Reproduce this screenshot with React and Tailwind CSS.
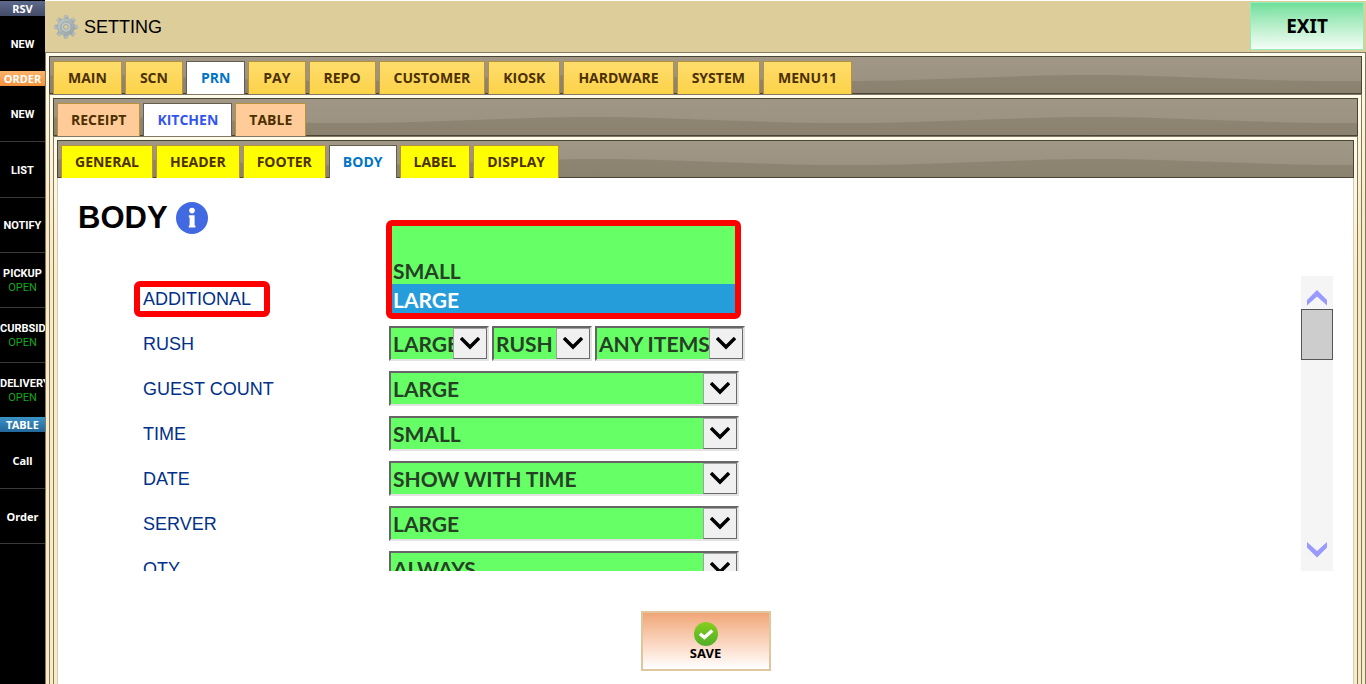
import { useState } from "react";
import clsx from "clsx";

const SIDE_ITEMS = [
  { label: "RSV", heading: "bg-linear-to-b from-[#5d6a8c] to-[#434c68]" },
  { label: "NEW", size: "h-[55px]" },
  { label: "ORDER", heading: "bg-linear-to-b from-[#fbb36a] to-[#f2923c]" },
  { label: "NEW", size: "h-[56px] border-b" },
  { label: "LIST", size: "h-[56px] border-b" },
  { label: "NOTIFY", size: "h-[55px] border-b" },
  { label: "PICKUP", status: "OPEN", size: "h-[55px] border-b" },
  { label: "CURBSIDE", status: "OPEN", size: "h-[55px] border-b" },
  { label: "DELIVERY", status: "OPEN", size: "h-[54px]" },
  { label: "TABLE", heading: "bg-linear-to-b from-[#3b93c6] to-[#22679a]" },
  { label: "Call", size: "h-[57px] border-b", wide: true },
  { label: "Order", size: "h-[55px] border-b", wide: true },
];

const MAIN_TABS = [
  "MAIN",
  "SCN",
  "PRN",
  "PAY",
  "REPO",
  "CUSTOMER",
  "KIOSK",
  "HARDWARE",
  "SYSTEM",
  "MENU11",
];
const PRN_TABS = ["RECEIPT", "KITCHEN", "TABLE"];
const KITCHEN_TABS = ["GENERAL", "HEADER", "FOOTER", "BODY", "LABEL", "DISPLAY"];

const FIELDS = [
  {
    label: "RUSH",
    selects: [
      { value: "LARGE", width: "w-[100px]" },
      { value: "RUSH", width: "w-[100px]" },
      { value: "ANY ITEMS", width: "w-[150px]" },
    ],
  },
  { label: "GUEST COUNT", selects: [{ value: "LARGE", width: "w-[350px]" }] },
  { label: "TIME", selects: [{ value: "SMALL", width: "w-[350px]" }] },
  { label: "DATE", selects: [{ value: "SHOW WITH TIME", width: "w-[350px]" }] },
  { label: "SERVER", selects: [{ value: "LARGE", width: "w-[350px]" }] },
  { label: "QTY", selects: [{ value: "ALWAYS", width: "w-[350px]" }] },
];

const Sidebar = () => (
  <nav className="w-[45px] shrink-0 overflow-hidden bg-black pt-px text-[11px] leading-[14px] font-bold text-white">
    {SIDE_ITEMS.map((item, index) =>
      item.heading ? (
        <h2
          key={index}
          className={clsx(
            "h-[15px] text-center font-['Noto_Sans',sans-serif] leading-4 font-bold",
            item.heading
          )}
        >
          {item.label}
        </h2>
      ) : (
        <button
          key={index}
          className={clsx(
            "flex w-full flex-col justify-center overflow-hidden border-[#3a3a3a] pt-[2px] whitespace-nowrap",
            item.wide
              ? "font-['Noto_Sans',sans-serif]"
              : "font-[Roboto,sans-serif]",
            item.size
          )}
        >
          <span className="block w-full text-center">{item.label}</span>
          {item.status && (
            <span className="block w-full text-center font-normal text-[#0fa81c]">
              {item.status}
            </span>
          )}
        </button>
      )
    )}
  </nav>
);

const GearIcon = () => (
  <svg viewBox="0 0 24 24" className="size-6" aria-hidden="true">
    <defs>
      <linearGradient id="gear" x1="0" y1="0" x2="1" y2="1">
        <stop offset="0" stopColor="#c6cdcd" />
        <stop offset="1" stopColor="#93a0a4" />
      </linearGradient>
    </defs>
    <g fill="url(#gear)" stroke="#98a3a4" strokeWidth="0.4">
      {[0, 45, 90, 135, 180, 225, 270, 315].map((angle) => (
        <path
          key={angle}
          d="M9.6 4.5 L10.2 0.4 H13.8 L14.4 4.5 Z"
          transform={`rotate(${angle} 12 12)`}
        />
      ))}
      <circle cx="12" cy="12" r="8.4" />
    </g>
    <circle cx="12" cy="12" r="5.2" fill="#c0c7c5" stroke="#929ea1" strokeWidth="0.8" />
    <circle cx="12" cy="12" r="2.4" fill="#ddcd9b" stroke="#929ea1" strokeWidth="0.8" />
  </svg>
);

// wood like strip behind the tabs, the wave repeats every 500px
const Wave = ({ id }) => (
  <svg className="absolute inset-0 size-full" aria-hidden="true">
    <defs>
      <linearGradient id={`${id}-shade`} x1="0" y1="0" x2="0" y2="1">
        <stop offset="0" stopColor="#8e8673" />
        <stop offset="1" stopColor="#89816e" />
      </linearGradient>
      <pattern
        id={id}
        x="40"
        width="500"
        height="40"
        patternUnits="userSpaceOnUse"
      >
        <path
          d="M0 18 C90 18 150 24 250 24 S410 18 500 18 V40 H0 Z"
          fill={`url(#${id}-shade)`}
        />
      </pattern>
    </defs>
    <rect width="100%" height="100%" fill={`url(#${id})`} />
  </svg>
);

const TabPanel = ({ id, tabs, active, onChange, tabStyle, tabPadding, activeColor, children }) => (
  <section className="flex grow flex-col border border-b-0 border-[#817865] bg-[#faecc2] bg-[linear-gradient(#fffbea,#faecc2_150px)]">
    <div className="px-[3px] pt-[3px]">
      <div
        role="tablist"
        className="relative flex h-[38px] items-end gap-[3px] border border-[#4a4435] bg-linear-to-b from-[#a19786] to-[#999080] px-[3px]"
      >
        <Wave id={id} />
        {tabs.map((tab) => (
          <button
            key={tab}
            role="tab"
            aria-selected={tab === active}
            onClick={() => onChange(tab)}
            className={clsx(
              "relative -mb-px h-[33px] border border-b-0 font-['Open_Sans',sans-serif] text-[14px] leading-5 font-bold",
              tabPadding,
              tab === active
                ? ["border-[#655e4e] bg-white", activeColor]
                : ["border-[#b8923a] text-[#4c3000]", tabStyle]
            )}
          >
            {tab}
          </button>
        ))}
      </div>
    </div>
    {children}
  </section>
);

const SelectBox = ({ value, width, label, id }) => (
  <div
    className={clsx(
      "relative h-[35px] border-2 border-t-[#666] border-r-[#e3e3e3] border-b-[#e3e3e3] border-l-[#666] bg-[#66ff66]",
      width
    )}
  >
    <select
      id={id}
      aria-label={label}
      defaultValue={value}
      className="block h-full w-full appearance-none overflow-hidden pr-[34px] pl-[2px] font-[Lato,sans-serif] text-[21px] leading-[29px] font-bold text-[#264026] outline-none"
    >
      <option>{value}</option>
    </select>
    <span className="pointer-events-none absolute top-0 right-0 flex h-[31px] w-[34px] items-center justify-center border border-[#696969] border-t-[#a0a0a0] border-l-[#a0a0a0] bg-[#f0f0f0]">
      <svg viewBox="0 0 20 14" className="h-[14px] w-5" aria-hidden="true">
        <path d="M1 1 L10 10 L19 1" fill="none" stroke="#000" strokeWidth="3.4" />
      </svg>
    </span>
  </div>
);

const ScrollBar = () => (
  <div className="flex w-8 flex-col bg-[#f5f5f5]">
    <button aria-label="Scroll up" className="flex h-[33px] justify-center pt-[14px]">
      <svg viewBox="0 0 20 16" className="h-4 w-5">
        <path d="M0 10 L10 0 L20 10 V15.5 L10 6.5 L0 15.5 Z" fill="#9999ff" />
      </svg>
    </button>
    <div className="h-[51px] border border-[#555] bg-[#cdcdcd]" />
    <button aria-label="Scroll down" className="mt-auto flex h-[33px] justify-center pt-1">
      <svg viewBox="0 0 20 16" className="h-4 w-5">
        <path d="M0 0 L10 9 L20 0 V5.5 L10 15.5 L0 5.5 Z" fill="#9999ff" />
      </svg>
    </button>
  </div>
);

const BodyForm = () => (
  <div className="mx-[3px] grow border-x border-[#d0cbbd] bg-white px-5">
    <h1 className="flex items-center gap-2 pt-[22px] font-['Liberation_Sans',sans-serif] text-[31px] leading-9 font-bold text-black">
      BODY
      <svg viewBox="0 0 32 32" className="size-8" aria-hidden="true">
        <circle cx="16" cy="16" r="16" fill="#4169e1" />
        <circle cx="16" cy="8.6" r="2.8" fill="#fff" />
        <path d="M12.8 13.2 H18.6 V23.4 H19.4 V25.6 H12.8 V23.4 H13.6 V15.4 H12.8 Z" fill="#fff" />
      </svg>
    </h1>
    <div className="relative mt-10 flex h-[295px] justify-between">
      <div className="h-full overflow-hidden pl-14 font-['Liberation_Sans',sans-serif] text-[18px] leading-6 text-[#003087]">
        <div className="flex h-[45px] items-center">
          <label
            htmlFor="additional"
            className="flex h-9 w-[136px] items-center rounded-[6px] border-6 border-[#ff0000] pl-[3px]"
          >
            ADDITIONAL
          </label>
        </div>
        {FIELDS.map((field) => (
          <div key={field.label} className="flex h-[45px] items-center pl-[9px]">
            <label htmlFor={field.label} className="w-[246px]">
              {field.label}
            </label>
            <div className="flex gap-[3px]">
              {field.selects.map((item, index) => (
                <SelectBox
                  key={index}
                  id={index === 0 ? field.label : undefined}
                  label={`${field.label} ${item.value}`}
                  {...item}
                />
              ))}
            </div>
          </div>
        ))}
      </div>
      <ScrollBar />
      {/* opened list of the first field */}
      <select
        id="additional"
        size={3}
        defaultValue="LARGE"
        className="absolute -top-14 left-[308px] h-[99px] w-[355px] overflow-hidden rounded-[6px] border-6 border-[#ff0000] bg-[#66ff66] font-[Lato,sans-serif] text-[21px] font-bold text-[#264026] outline-none"
      >
        {["", "SMALL", "LARGE"].map((option) => (
          <option
            key={option}
            value={option}
            className="h-[29px] min-h-[29px] p-0 pt-[3px] pl-px leading-[26px] font-bold checked:bg-[linear-gradient(#269ddb,#269ddb)] checked:text-white"
          >
            {option}
          </option>
        ))}
      </select>
    </div>
    <div className="flex justify-center pt-10 pb-4">
      <button className="flex h-[60px] w-[130px] flex-col items-center border-2 border-[#e0c69c] bg-linear-to-b from-[#f0a677] to-white pt-[9px] font-['Noto_Sans',sans-serif] text-[13px] leading-[14px] font-bold text-black">
        <svg viewBox="0 0 24 24" className="size-6" aria-hidden="true">
          <defs>
            <linearGradient id="tick" x1="0" y1="0" x2="0" y2="1">
              <stop offset="0" stopColor="#86cf1c" />
              <stop offset="1" stopColor="#4fae2a" />
            </linearGradient>
          </defs>
          <circle cx="12" cy="12" r="12" fill="url(#tick)" />
          <path d="M6 11.8 L10.4 15.6 L18.2 8.6" fill="none" stroke="#fff" strokeWidth="3.4" />
        </svg>
        SAVE
      </button>
    </div>
  </div>
);

const App = () => {
  const [mainTab, setMainTab] = useState("PRN");
  const [prnTab, setPrnTab] = useState("KITCHEN");
  const [kitchenTab, setKitchenTab] = useState("BODY");

  return (
    <div className="flex min-h-screen bg-white">
      <Sidebar />
      <main className="flex min-w-0 grow flex-col pt-px">
        <header className="flex h-[51px] items-start justify-between bg-[#ddcd9b]">
          <div className="flex items-center gap-[6px] pt-[14px] pl-[9px] font-['Liberation_Sans',sans-serif] text-[18px] leading-6 text-black">
            <GearIcon />
            SETTING
          </div>
          <button className="mt-px mr-[2px] h-12 w-[114px] border border-[#96ecb8] bg-linear-to-b from-[#6fdf9c] to-[#f4fdf7] font-['Noto_Sans',sans-serif] text-[19px] leading-6 font-bold text-black">
            EXIT
          </button>
        </header>
        <TabPanel
          id="wave-main"
          tabs={MAIN_TABS}
          active={mainTab}
          onChange={setMainTab}
          tabStyle="bg-linear-to-b from-[#fedd6c] to-[#fcd247]"
          tabPadding="px-[14px]"
          activeColor="text-[#0074c7]"
        >
          <div className="flex grow flex-col px-[3px]">
            <TabPanel
              id="wave-prn"
              tabs={PRN_TABS}
              active={prnTab}
              onChange={setPrnTab}
              tabStyle="bg-[#ffcc99]"
              tabPadding="px-[13px]"
              activeColor="text-[#3355ee]"
            >
              <div className="flex grow flex-col px-[3px]">
                <TabPanel
                  id="wave-kitchen"
                  tabs={KITCHEN_TABS}
                  active={kitchenTab}
                  onChange={setKitchenTab}
                  tabStyle="bg-[#ffff00]"
                  tabPadding="px-[13px]"
                  activeColor="text-[#0074c7]"
                >
                  <BodyForm />
                </TabPanel>
              </div>
            </TabPanel>
          </div>
        </TabPanel>
      </main>
    </div>
  );
};

export default App;
